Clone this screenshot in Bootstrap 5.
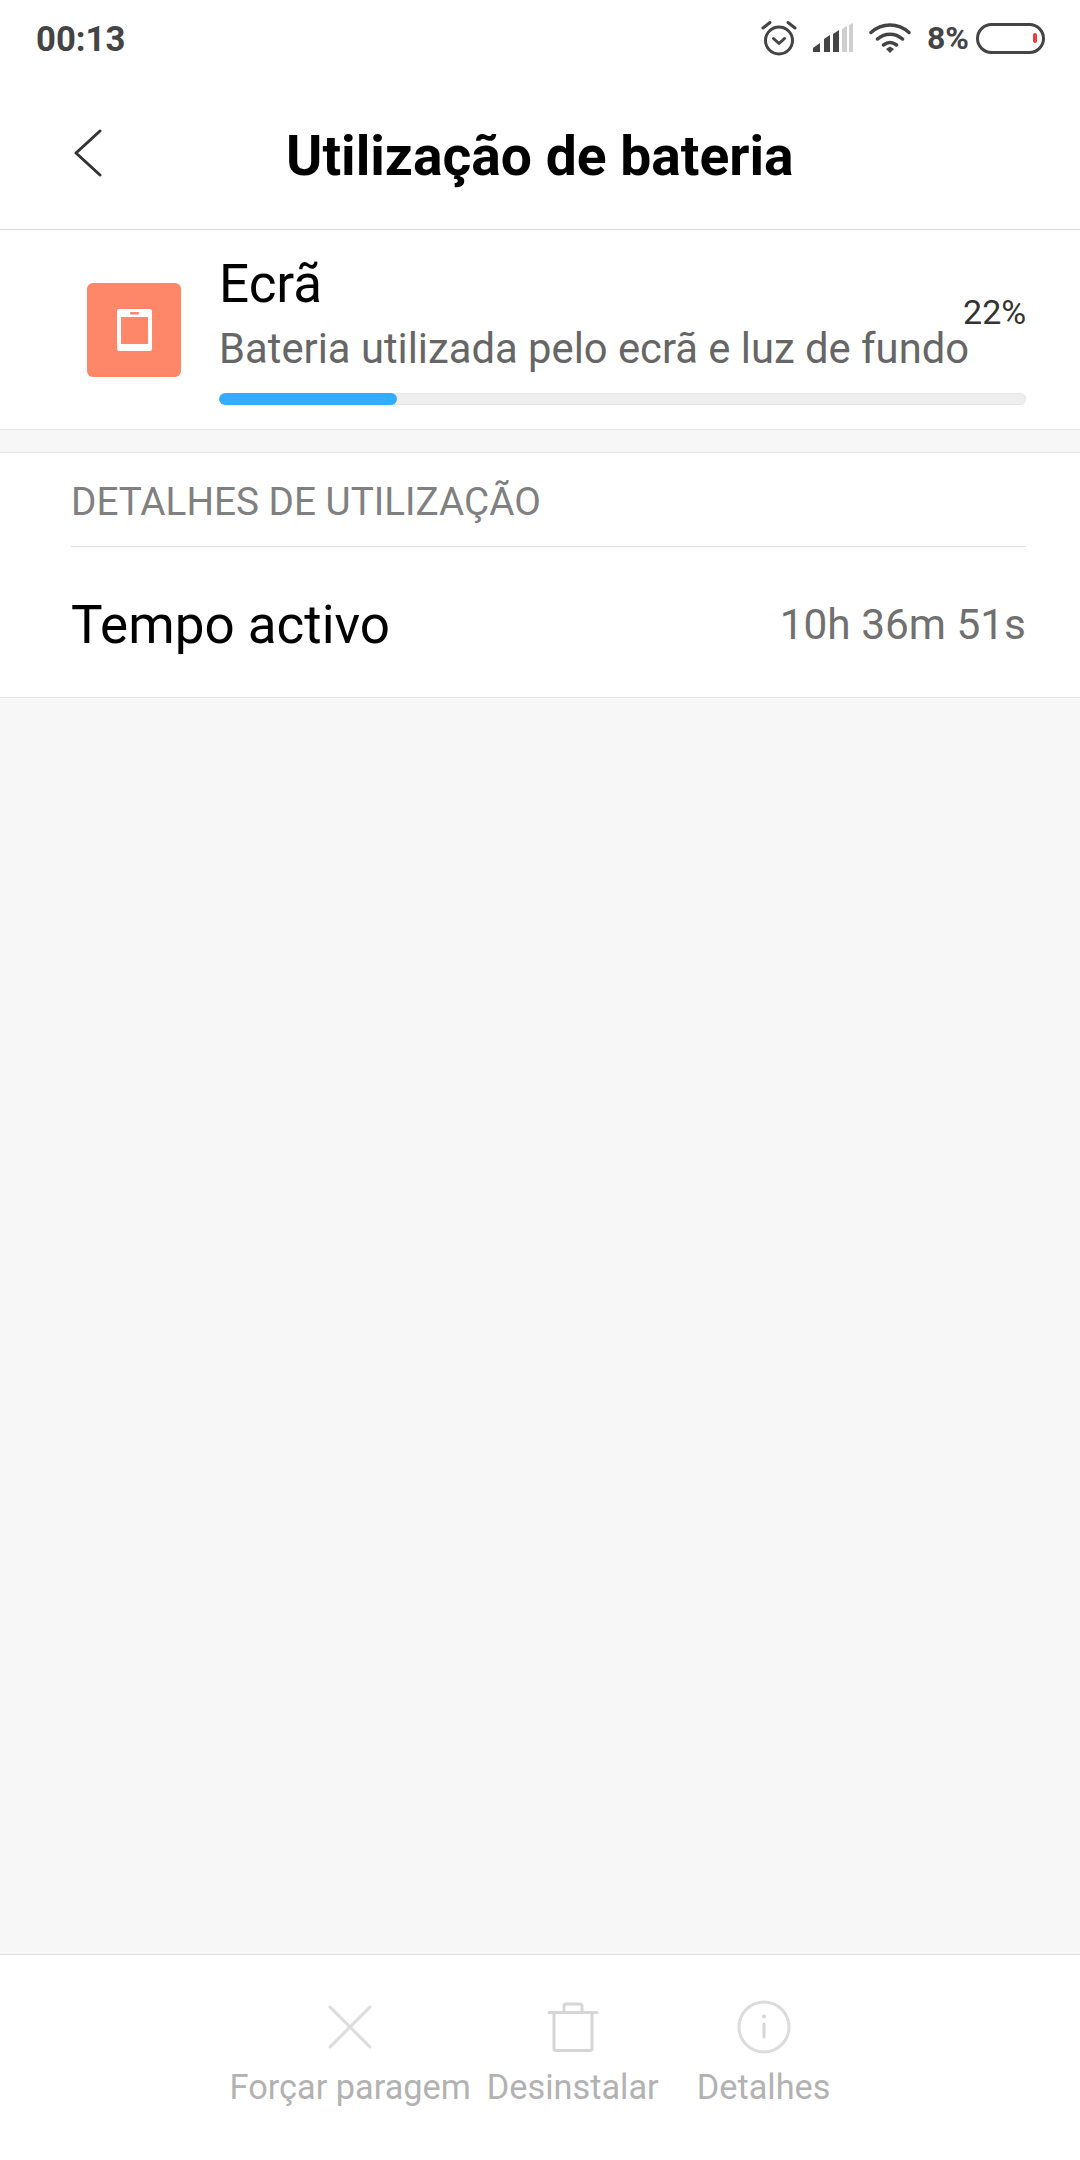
<!DOCTYPE html>
<html lang="pt">
<head>
<meta charset="utf-8">
<title>Utilização de bateria</title>
<link rel="stylesheet" href="https://cdn.jsdelivr.net/npm/bootstrap@5.3.0/dist/css/bootstrap.min.css">
<style>
html,body{height:2160px;margin:0}
body{font-family:Roboto,"Liberation Sans",sans-serif;background:#f7f7f7;color:#000;width:1080px;overflow:hidden}
.shell{height:2160px}
.status-strip{height:76px;padding:0 35px 0 36px;background:#fff;color:#444}
.clock{font-size:34.7px;font-weight:700;line-height:1;margin-top:2px}
.pct{font-size:32px;font-weight:700;line-height:1;margin-right:7px}
.head-bar{height:154px;background:#fff;border-bottom:1px solid #dcdcdc;padding-left:74px}
.page-title{font-size:55.2px;font-weight:700;line-height:1;margin:8px 0 0 184px}
.usage-card{height:200px;background:#fff;border-bottom:1px solid #e3e3e3;padding:0 54px 0 87px}
.app-tile{width:94px;height:94px;background:#fe8669;border-radius:6px;flex:none}
.usage-body{margin-left:38px;min-width:0}
.usage-name{font-size:53px;line-height:58px}
.usage-desc{font-size:41.75px;line-height:48px;color:#666;white-space:nowrap;margin-top:12px}
.usage-pct{font-size:34px;color:#333;line-height:36px;margin:0 0 4px -6px}
.meter{height:12px;background:#eee;border-radius:6px;margin-top:20px;box-shadow:inset 0 0 0 1px #e6e6e6;--bs-progress-bar-bg:#31adfb}
.spacer-band{height:22px;flex:none}
.detail-box{background:#fff;border-top:1px solid #e3e3e3;border-bottom:1px solid #e6e6e6;padding:0 54px 0 71px}
.detail-head{height:94px;border-bottom:1px solid #e0e0e0;font-size:38.700px;color:#808080;padding-top:5px}
.detail-row{height:150px;padding-top:6px}
.detail-key{font-size:53px;line-height:1}
.detail-val{font-size:42.400px;color:#707070;line-height:1}
.action-bar{height:206px;background:#fff;border-top:1px solid #dedede;padding-top:45px}
.act{font-size:34.300px;color:#b2b2b2;line-height:44px;white-space:nowrap}
.act svg{display:block;margin:0 auto}
.act-icon{height:53px;margin-bottom:12px}
.act-first{margin-left:-20px}
.act-last{margin-left:38px}
</style>
</head>
<body>
<div class="shell d-flex flex-column">
  <div class="status-strip d-flex align-items-center justify-content-between">
    <span class="clock">00:13</span>
    <div class="d-flex align-items-center">
      <svg width="36" height="36" viewBox="0 0 36 36" fill="none" stroke="#444" stroke-width="3" stroke-linecap="round" stroke-linejoin="round" class="me-3"><circle cx="18" cy="20.5" r="13.5"/><path d="M12.5 18.5l5.5 5 5.500-5M2 8l7-5.500M34 8l-7-5.500"/></svg>
      <svg width="40" height="30" viewBox="0 0 40 30" class="me-3"><path d="M0 29v-4l7-5v9zM11 29V16l6-4v17zM20 29V11l6-4v22z" fill="#444"/><path d="M29 29V6l5-3v26zM36 29V2l4-2v29z" fill="#cfcfcf"/></svg>
      <svg width="42" height="30" viewBox="0 0 42 30" fill="none" stroke="#444" stroke-width="3.500" stroke-linecap="round" class="me-3"><path d="M2 9.500c11-10 27-10 38 0M8.500 16c7.500-6.500 17.500-6.500 25 0M14.500 22c4-3 9-3 13 0"/><path d="M17 26l4-2.500 4 2.500-4 4z" fill="#444" stroke="none"/></svg>
      <span class="pct">8%</span>
      <svg width="69" height="31" viewBox="0 0 69 31"><rect x="1.500" y="1.500" width="66" height="28" rx="14" fill="#fff" stroke="#444" stroke-width="3"/><rect x="57" y="10" width="4" height="10" rx="2" fill="#ee3b3b"/></svg>
    </div>
  </div>

  <div class="head-bar d-flex align-items-center">
    <svg width="28" height="48" viewBox="0 0 28 48" fill="none" stroke="#333" stroke-width="3" stroke-linecap="round" stroke-linejoin="round"><path d="M26 2L2 24l24 22"/></svg>
    <h1 class="page-title">Utilização de bateria</h1>
  </div>

  <div class="usage-card d-flex align-items-center">
    <div class="app-tile d-flex align-items-center justify-content-center">
      <svg width="35" height="42" viewBox="0 0 35 42"><rect width="35" height="42" rx="2" fill="#fff"/><rect x="4" y="8" width="27" height="27" fill="#fe8669"/><rect x="13" y="3" width="9" height="2.500" rx="1" fill="#fe8669"/></svg>
    </div>
    <div class="usage-body flex-grow-1">
      <div class="d-flex justify-content-between">
        <div>
          <div class="usage-name">Ecrã</div>
          <div class="usage-desc">Bateria utilizada pelo ecrã e luz de fundo</div>
        </div>
        <div class="usage-pct align-self-center">22%</div>
      </div>
      <div class="progress meter"><div class="progress-bar rounded-pill" style="width:22%"></div></div>
    </div>
  </div>

  <div class="spacer-band"></div>

  <div class="detail-box">
    <div class="detail-head d-flex align-items-center">DETALHES DE UTILIZAÇÃO</div>
    <div class="detail-row d-flex align-items-center justify-content-between">
      <span class="detail-key">Tempo activo</span>
      <span class="detail-val">10h 36m 51s</span>
    </div>
  </div>

  <div class="flex-grow-1"></div>

  <div class="action-bar d-flex justify-content-center">
    <div class="act act-first text-center">
      <div class="act-icon d-flex align-items-center justify-content-center"><svg width="44" height="44" viewBox="0 0 44 44" fill="none" stroke="#dcdcdc" stroke-width="3" stroke-linecap="round"><path d="M2 2l40 40M42 2L2 42"/></svg></div>
      Forçar paragem
    </div>
    <div class="act text-center ms-3">
      <div class="act-icon d-flex align-items-center justify-content-center"><svg width="52" height="50" viewBox="0 0 52 50" fill="none" stroke="#d6d6d6" stroke-width="3" stroke-linecap="round" stroke-linejoin="round"><path d="M2 10.500h48M7 10.500v36q0 2 2 2h34q2 0 2-2v-36M17 10.500V4q0-2 2-2h14q2 0 2 2v6.500"/></svg></div>
      Desinstalar
    </div>
    <div class="act act-last text-center">
      <div class="act-icon d-flex align-items-center justify-content-center"><svg width="54" height="54" viewBox="0 0 54 54" fill="none" stroke="#dcdcdc" stroke-width="3" stroke-linecap="round"><circle cx="27" cy="27" r="25"/><path d="M27 24v13" stroke="#d6d6d6"/><circle cx="27" cy="16.500" r="2" fill="#d6d6d6" stroke="none"/></svg></div>
      Detalhes
    </div>
  </div>
</div>
</body>
</html>
